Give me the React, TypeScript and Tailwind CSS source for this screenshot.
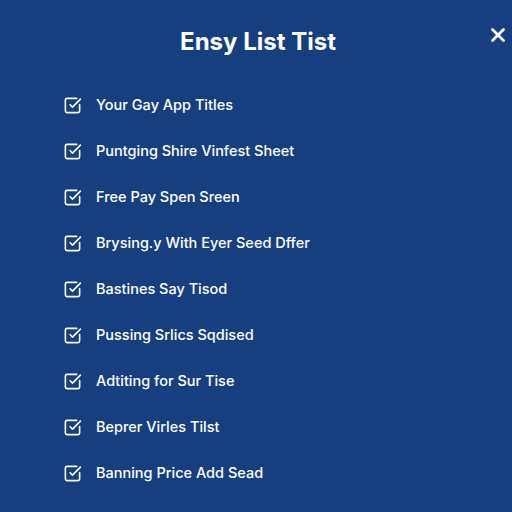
import { SquareCheckBig, X } from "lucide-react";

const items = [
    "Your Gay App Titles",
    "Puntging Shire Vinfest Sheet",
    "Free Pay Spen Sreen",
    "Brysing.y With Eyer Seed Dffer",
    "Bastines Say Tisod",
    "Pussing Srlics Sqdised",
    "Adtiting for Sur Tise",
    "Beprer Virles Tilst",
    "Banning Price Add Sead",
];

export default function App() {
    return (
        <main
            className="relative w-[512px] h-[512px] bg-[#173f80] text-white"
            style={{ fontFamily: "Inter, 'Liberation Sans', sans-serif" }}
        >
            <button className="absolute right-[3px] top-[24px] text-white">
                <X className="w-[22px] h-[22px]" strokeWidth={3} />
            </button>

            <h1 className="pt-[27px] pl-[4px] text-center text-[24px] leading-[30px] font-bold">
                Ensy List Tist
            </h1>

            <ul className="mt-[36px] pl-[63px] flex flex-col gap-[22px]">
                {items.map((item) => (
                    <li key={item} className="flex items-center gap-[14px] h-[24px]">
                        <SquareCheckBig className="w-[19px] h-[19px]" strokeWidth={2} />
                        <span className="text-[14.5px] font-medium">{item}</span>
                    </li>
                ))}
            </ul>
        </main>
    );
}
